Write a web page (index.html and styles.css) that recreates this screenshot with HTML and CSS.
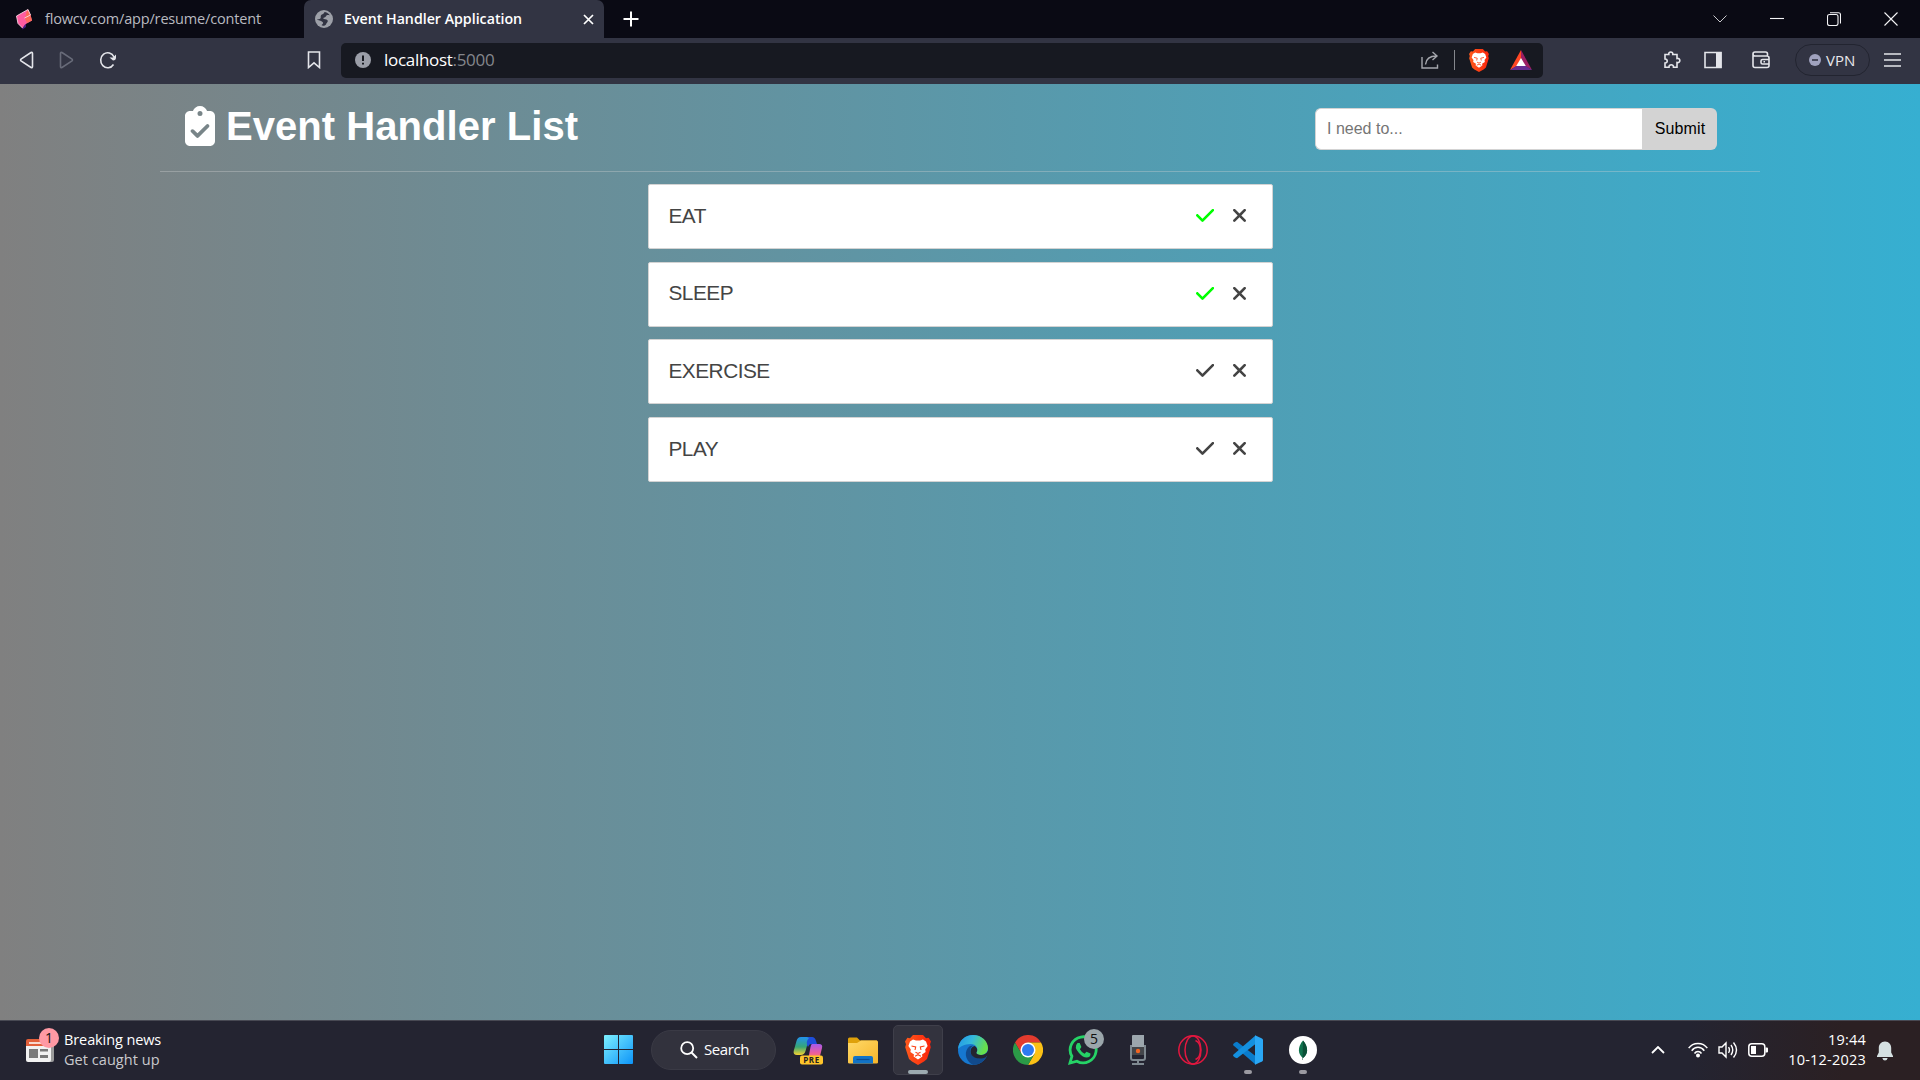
FILE: index.html
```html
<!DOCTYPE html>
<html lang="en">
<head>
<meta charset="utf-8">
<title>Event Handler Application</title>
<link rel="stylesheet" href="styles.css">
</head>
<body>
<svg class="sprite" width="0" height="0" aria-hidden="true">
  <defs>
    <linearGradient id="brave-fill" x1="0" y1="0" x2="1" y2="0"><stop offset="0" stop-color="#ff5a1c"/><stop offset="1" stop-color="#f9240c"/></linearGradient>
    <linearGradient id="win-fill" x1="0" y1="0" x2="1" y2="1"><stop offset="0" stop-color="#7df0ff"/><stop offset="1" stop-color="#0d94f8"/></linearGradient>
    <symbol id="check" viewBox="0 0 448 512"><path d="M438.6 105.4c12.5 12.5 12.5 32.8 0 45.3l-256 256c-12.5 12.5-32.8 12.5-45.3 0l-128-128c-12.5-12.5-12.5-32.8 0-45.3s32.8-12.5 45.3 0L160 338.7 393.4 105.4c12.5-12.5 32.8-12.5 45.3 0z"/></symbol>
    <symbol id="xmark" viewBox="0 0 320 512"><path d="M310.6 150.6c12.5-12.5 12.5-32.8 0-45.3s-32.8-12.5-45.3 0L160 210.7 54.6 105.4c-12.5-12.5-32.8-12.5-45.3 0s-12.5 32.8 0 45.3L114.7 256 9.4 361.4c-12.5 12.5-12.5 32.8 0 45.3s32.8 12.5 45.3 0L160 301.3 265.4 406.6c12.5 12.5 32.8 12.5 45.3 0s12.5-32.8 0-45.3L205.3 256 310.6 150.6z"/></symbol>
    <symbol id="lion" viewBox="0 0 26 30">
      <path fill="url(#brave-fill)" d="M8 0h10l3 3.2 2.6-.4L26 6.600l-1 2.600.8 3L22 24l-3 2.600-6 3.400-6-3.400L4 24 .2 12.200l.8-3L0 6.600l2.400-3.800L5 3.200z"/>
      <path fill="#fff" d="M8 4.600l3 .8h4l3-.8 3 2L22.600 11l-2.400 3.400.4 2.600-3.600 2.400.4 2.200-4.400 3-4.400-3 .4-2.200L5.400 17l.4-2.600L3.400 11 5 6.600z"/>
      <path fill="none" stroke="#fb4216" stroke-width="1.100" d="M6.500 11l4.200 1-.7 3M19.500 11l-4.200 1 .7 3M10.500 17.200l2.500 1.200 2.500-1.200M10 21.200l3-1.500 3 1.500"/>
    </symbol>
  </defs>
</svg>

<div class="screen">
  <header class="browser">
    <div class="tabstrip">
      <div class="tab">
        <svg class="tab-icon" width="18" height="22" viewBox="0 0 18 22"><path fill="#4a1c80" d="M6 15.500l5-1v4.500l-3.500 2.500z"/><path fill="#ff5ca0" d="M1.500 8L13 1.500l2.500 5.500 1.500 5.500-7 4-2.500 3.500-4.500-4.500z"/><path fill="#ff6a58" d="M13 1.500L15.500 7l1.500 5.500-5 2.500-2-4.500 1.500-6.500z"/><path stroke="#f7d5e2" stroke-width=".9" fill="none" d="M13 1.500L1.500 8 3 15.500l4.500 4.500M13 1.500l2.500 5.500-6 3"/></svg>
        <span class="tab-title">flowcv.com/app/resume/content</span>
      </div>
      <div class="tab tab-active">
        <svg class="tab-globe" width="18" height="18" viewBox="0 0 18 18"><circle cx="9" cy="9" r="9" fill="#9da0a8"/><path fill="#323443" d="M9.500 2c2 .2 4 1.400 5.500 3.500-1.600-.6-3.500-.6-4 .8-.6 1.600-2.500.8-2.800 2.200.6 1.300 3.300.3 4.300 1.700 1 1.600-.9 2.200-1.500 4.300-1 1.600-4 1.800-4.500.6 1-1 2-1.500 1.500-2.600C7 10.700 4 10.700 2 9.500c.2-.8 2 .3 3.200-.7C6.500 7.500 5 6.500 6.200 5 7 4 9 4 9.500 2z"/></svg>
        <span class="tab-title tab-title-active">Event Handler Application</span>
        <svg class="tab-close" width="11" height="11" viewBox="0 0 11 11"><path d="M1 1l9 9M10 1l-9 9" stroke="#fff" stroke-width="1.700"/></svg>
      </div>
      <svg class="tab-new" width="16" height="16" viewBox="0 0 16 16"><path d="M8 .5v15M.5 8h15" stroke="#fff" stroke-width="2"/></svg>
      <div class="window-buttons">
        <svg class="tab-search" width="14" height="14" viewBox="0 0 14 14"><path d="M.5 3.500l6.500 6.500L13.500 3.500"/></svg>
        <svg width="14" height="14" viewBox="0 0 14 14"><path d="M0 6.500h14"/></svg>
        <svg width="14" height="14" viewBox="0 0 14 14"><rect x=".5" y="2.500" width="10.500" height="11" rx="2"/><path d="M3 .7h8.500a2 2 0 0 1 2 2V11.500"/></svg>
        <svg width="14" height="14" viewBox="0 0 14 14"><path d="M.5.5l13 13M13.500.5l-13 13"/></svg>
      </div>
    </div>
    <div class="toolbar">
      <div class="nav-buttons">
        <svg width="15" height="18" viewBox="0 0 15 18"><path d="M12 1.500L2 8.200q-.9.800 0 1.600l10 6.700q1.500.5 1.500-1V2.500q0-1.500-1.500-1z"/></svg>
        <svg class="nav-off" width="15" height="18" viewBox="0 0 15 18"><path d="M3 1.500l10 6.700q.9.800 0 1.600L3 16.500q-1.500.5-1.500-1V2.500q0-1.500 1.500-1z"/></svg>
        <svg width="18" height="18" viewBox="0 0 18 18"><path d="M14.500 13.500A7 7.500 0 1 1 15 6"/><path fill="#e4e5ea" stroke="none" d="M10.500 6.500h3.500l3-3v3q0 3-3 3z"/></svg>
      </div>
      <svg class="bookmark" width="14" height="18" viewBox="0 0 14 18"><path d="M1.500 1h11v15.500L7 11.800l-5.500 4.700z"/></svg>
      <div class="address">
        <svg width="16" height="16" viewBox="0 0 16 16"><circle cx="8" cy="8" r="8" fill="#9b9ea8"/><path d="M8 3.500v5.500M8 10.800v1.800" stroke="#16181f" stroke-width="2"/></svg>
        <span class="url">localhost<span class="port">:5000</span></span>
        <svg class="share" width="18" height="18" viewBox="0 0 18 18"><path d="M1 6v11h15.500v-3.500M4.500 13.500C5 8 8 5 15.500 5M11.500 1l4.500 4-4.500 4"/></svg>
        <i class="address-rule"></i>
        <svg class="shield" width="20" height="23"><use href="#lion"/></svg>
        <svg class="bat" width="22" height="20" viewBox="0 0 22 20"><path fill="#ff4724" d="M11 0L0 20l7-4 4-7z"/><path fill="#9e1f63" d="M11 0l11 20-7-4-4-7z"/><path fill="#662d91" d="M0 20l7-4.500h8l7 4.500z"/><path fill="#fff" d="M11 8l4.800 8H6.200z"/></svg>
      </div>
      <div class="extensions">
        <svg width="18" height="18" viewBox="0 0 18 18"><path d="M2 3.500h3.800C5 .2 10.500.2 9.800 3.500H14v4c3.800-.8 3.800 4.800 0 4v4.700h-3.500c.3-3.200-4.800-3.200-4.500 0H2V12c3 .2 3-4.200 0-4z"/></svg>
        <svg class="sidepanel" width="18" height="18" viewBox="0 0 18 18"><path d="M1 1.500h16v15H1z"/><path fill="#e4e5ea" stroke="none" d="M12 1h5.500v16H12z"/></svg>
        <svg width="18" height="18" viewBox="0 0 18 18"><path d="M1 3v11.500q0 2 2 2h12q2 0 2-2V7q0-2-2-2H3Q1 5 1 3q0-2 2-2h10.500q2 0 2 2v2M17 8.500h-6.500q-1.500 0-1.500 1.500v1.500q0 1.500 1.500 1.500H17M11.500 10.800h1.500"/></svg>
        <span class="vpn"><svg width="12" height="12" viewBox="0 0 12 12"><circle cx="6" cy="6" r="6" fill="#a0a2be" stroke="none"/><path d="M3 6h6" stroke="#323443"/></svg><span class="vpn-label">VPN</span></span>
        <svg class="menu" width="17" height="14" viewBox="0 0 17 14"><path d="M0 1h17M0 7h17M0 13h17"/></svg>
      </div>
    </div>
  </header>

  <main class="page">
    <div class="page-head">
      <h1 class="page-title"><svg width="30" height="40" viewBox="0 0 384 512"><path fill="#fff" d="M192 0c-41.800 0-77.400 26.700-90.500 64H64C28.700 64 0 92.700 0 128V448c0 35.300 28.700 64 64 64H320c35.300 0 64-28.700 64-64V128c0-35.300-28.700-64-64-64H282.500C269.400 26.700 233.800 0 192 0zm0 64a32 32 0 1 1 0 64 32 32 0 1 1 0-64zM305 273L177 401c-9.400 9.400-24.600 9.400-33.900 0L79 337c-9.400-9.400-9.400-24.600 0-33.900s24.600-9.400 33.900 0l47 47L271 239c9.400-9.400 24.600-9.400 33.900 0s9.400 24.600 0 33.900z"/></svg><span>Event Handler List</span></h1>
      <form class="todo-form">
        <input class="todo-input" type="text" placeholder="I need to...">
        <button class="todo-submit" type="button">Submit</button>
      </form>
    </div>
    <ul class="todo-list">
      <li class="todo"><span class="todo-name">EAT</span><svg class="done-icon done"><use href="#check"/></svg><svg class="remove-icon"><use href="#xmark"/></svg></li>
      <li class="todo"><span class="todo-name">SLEEP</span><svg class="done-icon done"><use href="#check"/></svg><svg class="remove-icon"><use href="#xmark"/></svg></li>
      <li class="todo"><span class="todo-name">EXERCISE</span><svg class="done-icon"><use href="#check"/></svg><svg class="remove-icon"><use href="#xmark"/></svg></li>
      <li class="todo"><span class="todo-name">PLAY</span><svg class="done-icon"><use href="#check"/></svg><svg class="remove-icon"><use href="#xmark"/></svg></li>
    </ul>
  </main>

  <footer class="taskbar">
    <div class="widget">
      <div class="widget-icon">
        <svg width="28" height="24" viewBox="0 0 28 24"><rect x="4" y="4" width="24" height="20" rx="2" fill="#9b9b9b"/><path fill="#f2f2f2" d="M0 4h25v18q0 2-2 2H2q-2 0-2-2z"/><path fill="#e2603a" d="M2 1h21q2 0 2 2v5H0V3q0-2 2-2z"/><path stroke="#fff" stroke-width="1.500" d="M3 5h14"/><path fill="#797979" d="M3 11h9v9H3zM14 11h8v2.500h-8zM14 17h8v3h-8z"/></svg>
        <span class="badge badge-news">1</span>
      </div>
      <div class="widget-text"><span class="widget-title">Breaking news</span><span class="widget-sub">Get caught up</span></div>
    </div>
    <nav class="apps">
      <div class="app"><svg width="29" height="29" viewBox="0 0 29 29"><path fill="url(#win-fill)" d="M1 0h13v14H0V1q0-1 1-1zM15 0h13q1 0 1 1v13H15zM0 15h14v14H1q-1 0-1-1zM15 15h14v13q0 1-1 1H15z"/></svg></div>
      <div class="search"><svg width="18" height="18" viewBox="0 0 18 18"><circle cx="7.200" cy="7.200" r="6" fill="none" stroke="#fff" stroke-width="1.800"/><path d="M11.500 11.500l5.500 5.500" stroke="#fff" stroke-width="1.900"/></svg><span class="search-label">Search</span></div>
      <div class="app">
        <svg width="30" height="30" viewBox="0 0 30 30">
          <defs><linearGradient id="co-a" x1="0" y1="0" x2="0" y2="1"><stop offset="0" stop-color="#2292ee"/><stop offset=".55" stop-color="#36a675"/><stop offset="1" stop-color="#f6d331"/></linearGradient><linearGradient id="co-b" x1="0" y1="0" x2="0" y2="1"><stop offset="0" stop-color="#a55aeb"/><stop offset=".6" stop-color="#ed5d9c"/><stop offset="1" stop-color="#f58c4a"/></linearGradient></defs>
          <path fill="url(#co-a)" d="M8 2h12q-4 1-5.500 7l-2 7q-1 4-5 4H4q-4 0-3.300-4l2.800-10Q4.500 2 8 2z"/><path fill="#1e4edb" d="M14 2h5q3 0 4 4l1 3h-6q-2 0-3 3-3-5 1-9z"/><path fill="url(#co-b)" d="M19 9h7q4 0 3 4l-2 8q-1 3-5 3h-9q2 0 3-4l1.500-8Q18 9 19 9z"/><rect x="7" y="20.500" width="23" height="9" rx="2" fill="#ffc52b"/><text class="pre-label" x="18.500" y="28" text-anchor="middle">PRE</text>
        </svg>
      </div>
      <div class="app">
        <svg width="30" height="30" viewBox="0 0 30 30"><defs><linearGradient id="fold" x1="0" y1="0" x2="1" y2="1"><stop offset="0" stop-color="#ffd968"/><stop offset="1" stop-color="#f6b52a"/></linearGradient></defs><path fill="#dfa10b" d="M0 4q0-1.500 1.500-1.500H9l3 3h17V12H0z"/><path fill="url(#fold)" d="M0 8h9l4-2.500h15.500Q30 5.500 30 7v20.500q0 1-1.500 1h-27Q0 28.500 0 27.500z"/><path fill="#1273c6" d="M5 28.500V23q0-2 2-2h16q2 0 2 2v5.500z"/><path stroke="#0b4c93" stroke-width="1.200" d="M8.500 24.500h13"/></svg>
      </div>
      <div class="app app-active"><svg width="26" height="30"><use href="#lion"/></svg><i class="run-mark run-wide"></i></div>
      <div class="app">
        <svg width="30" height="30" viewBox="0 0 30 30"><defs><linearGradient id="ed-a" x1="0" y1="0" x2="1" y2=".3"><stop offset="0" stop-color="#2196e8"/><stop offset=".5" stop-color="#35b9dc"/><stop offset="1" stop-color="#67e04c"/></linearGradient></defs>
        <circle cx="15" cy="15" r="15" fill="#1678d0"/><path fill="url(#ed-a)" d="M0 14C1 5 7.500 0 15 0c9 0 15 6.500 15 13 0 4.500-3.500 7-7.500 7-3 0-5-1.200-4-2.700C20.500 14 18.500 9 12.500 9 6.500 9 1.500 12 0 14z"/><path fill="#114a8c" d="M12 11c-6 4-6 14 3 19 6 0 10.500-3.500 13.200-7.500.3-.7-.2-1-.7-.7C21 25 12 22.500 12.200 15.500c0-2 1.300-3.700 3-5z"/><path fill="#24242f" d="M18.500 17.300c1.500-2.500.5-5-2-6.300-4 1-5 5.500-3 9 3 4.200 10 4.500 14.500 2l2.500-3V13.500c-.5 4-3.500 6.500-7.500 6.500-3 0-5-1.200-4.500-2.700z"/></svg>
      </div>
      <div class="app">
        <svg width="30" height="30" viewBox="0 0 30 30"><path fill="#e33b2e" d="M2 7.500A15 15 0 0 1 28 7.500H15l-6.500 11.200z"/><path fill="#fbc116" d="M28 7.500A15 15 0 0 1 15 30l6.500-11.200L15 7.500z"/><path fill="#2b9a47" d="M15 30A15 15 0 0 1 2 7.500l6.500 11.200 13 .1z"/><circle cx="15" cy="15" r="7.500" fill="#fff"/><circle cx="15" cy="15" r="6" fill="#2f7af0"/></svg>
      </div>
      <div class="app">
        <svg width="30" height="30" viewBox="0 0 30 30"><path fill="none" stroke="#25d366" stroke-width="2.800" d="M2 28l1.900-6.700A13 13 0 1 1 8.900 26.200z"/><path fill="#25d366" d="M9.500 8h2.200l1.700 4-1.500 2.200q1.500 3 4.700 4.500l1.900-2 4 1.800q.3 4-4 4Q15 22.500 11 18 5.500 12 9.500 8z"/></svg>
        <span class="badge badge-chat">5</span>
      </div>
      <div class="app">
        <svg width="30" height="30" viewBox="0 0 30 30"><path fill="none" stroke="#7f8991" stroke-width="2" d="M8 10v13q0 2 2 2h10q2 0 2-2V10M15 25v4M9 29h12"/><path fill="#9ca6ad" d="M10 0h11v12H9V1q0-1 1-1z"/><path fill="#44464b" d="M9 12h12v8H9z"/><circle cx="15" cy="16" r="2.200" fill="#f26522"/></svg>
      </div>
      <div class="app">
        <svg width="30" height="30" viewBox="0 0 30 30" fill="none" stroke="#e3173f" stroke-width="1.500"><circle cx="15" cy="15" r="14.200"/><ellipse cx="15" cy="15" rx="8" ry="14"/><path d="M17.500 5.500C24 8 24 22 17.500 24.500"/></svg>
      </div>
      <div class="app">
        <svg width="30" height="30" viewBox="0 0 30 30"><path fill="#0a7ccc" d="M2 7.500l2-.8L22.500 21v8.500L.5 10.500q-.8-1 0-1.800z"/><path fill="#1490df" d="M2 22.500l2 .8L22.500 9V.5L.5 19.500q-.8 1 0 1.800z"/><path fill="#2aa7f5" d="M22 .2l7 3.300q1 .5 1 1.500v20q0 1-1 1.500l-7 3.300z"/></svg>
        <i class="run-mark"></i>
      </div>
      <div class="app">
        <svg width="30" height="30" viewBox="0 0 30 30"><circle cx="15" cy="15" r="14" fill="#fff"/><path fill="#10744e" d="M15 5.500c6 7 5 14 0 17.500-5-3.500-6-10.500 0-17.500z"/><path fill="#0b5037" d="M15 5.500c6 7 5 14 0 17.500v2h-.5z"/></svg>
        <i class="run-mark"></i>
      </div>
    </nav>
    <div class="tray">
      <svg class="tray-up" width="14" height="8" viewBox="0 0 14 8"><path d="M1 7l6-6 6 6" stroke-width="1.800"/></svg>
      <svg width="20" height="16" viewBox="0 0 20 16"><path stroke-width="1.500" d="M.7 6.200C5-.2 15-.2 19.300 6.200M3.700 8.800C7 4.200 13 4.200 16.300 8.800M6.500 11.500c1.800-2.800 5.200-2.800 7 0"/><circle cx="10" cy="13.500" r="2" fill="#fff" stroke="none"/></svg>
      <svg width="20" height="18" viewBox="0 0 20 18"><path stroke-width="1.400" d="M1 6h3l4-4v14l-4-4H1zM10.500 6.200q2 2.800 0 5.600M13 4q3.500 5 0 10M15.500 1.500q6 7.500 0 15"/></svg>
      <svg width="20" height="14" viewBox="0 0 20 14"><rect x=".8" y=".8" width="16" height="12.400" rx="3" stroke-width="1.500"/><path fill="#fff" stroke="none" d="M3 3h5v8H3zM17.500 4.500H19q1 0 1 1v3q0 1-1 1h-1.500z"/></svg>
      <div class="clock"><span class="time">19:44</span><span class="date">10-12-2023</span></div>
      <svg class="bell" width="18" height="20" viewBox="0 0 18 20"><path fill="#d6e1e2" stroke="none" d="M9 .5c4 0 6.200 3 6.200 6.500v4.500l1.800 3.500v1H1v-1l1.800-3.500V7C2.800 3.500 5 .5 9 .5zM6.300 17h5.400q-.7 2.500-2.700 2.500T6.300 17z"/></svg>
    </div>
  </footer>
</div>
</body>
</html>
```
FILE: styles.css
```css
* { box-sizing: border-box; }
body { margin: 0; font-family: "Open Sans", "Noto Sans", sans-serif; color: #fff; }
svg { display: block; flex: none; }
.sprite { position: absolute; }
.screen { width: 1920px; height: 1080px; display: flex; flex-direction: column; overflow: hidden; }

.browser { background: #323443; height: 84px; flex: none; }
.tabstrip { height: 38px; background: #0a0a14; display: flex; align-items: center; }
.tab { width: 304px; height: 38px; padding-left: 15px; display: flex; align-items: center; }
.tab-active { width: 300px; padding: 0 10px 0 11px; background: #323443; border-radius: 7px 7px 0 0; }
.tab-icon { margin-right: 12px; }
.tab-globe { margin-right: 11px; }
.tab-title { padding-bottom: 2px; font-size: 14.5px; letter-spacing: -0.16px; color: #b9bac0; white-space: nowrap; }
.tab-title-active { font-size: 14.2px; font-weight: 600; color: #fff; letter-spacing: 0; }
.tab-close { margin-left: auto; }
.tab-new { margin-left: 19px; }
.window-buttons { margin-left: auto; margin-right: 22px; display: flex; gap: 43px; fill: none; stroke: #f4f4f6; stroke-width: 1.1; }
.tab-search { stroke: #c8c8cc; stroke-width: 1; }

.toolbar { height: 46px; display: flex; align-items: center; padding-bottom: 2px; fill: none; stroke: #e4e5ea; stroke-width: 1.6; }
.nav-buttons { display: flex; gap: 25px; padding-left: 19px; width: 307px; }
.nav-off { stroke: #686b79; }
.bookmark { margin-right: 20px; }
.address { width: 1202px; height: 35px; background: #171921; border-radius: 5px; display: flex; align-items: center; padding: 0 11px 0 14px; stroke: none; }
.url { margin-left: 13px; padding-bottom: 1px; font-size: 17px; letter-spacing: -0.3px; margin-right: auto; }
.port { color: #84868c; }
.share { stroke: #a5a7ad; stroke-width: 1.4; }
.address-rule { width: 1px; height: 20px; background: #85878d; margin: 0 14px 0 15px; }
.bat { margin-left: 21px; }
.extensions { margin-left: auto; margin-right: 19px; display: flex; align-items: center; }
.sidepanel { margin: 0 30px 0 23px; }
.vpn { width: 75px; height: 32px; border: 1.5px solid #222430; border-radius: 16px; margin: 0 14px 0 25px; display: flex; align-items: center; padding-left: 13px; gap: 5px; }
.vpn-label { padding-bottom: 1px; font-size: 15px; color: #e8e8ec; }
.menu { stroke-width: 1.4; }

.page { flex: 1; background: linear-gradient(to right, #808080, #36afd1); font-family: "Liberation Sans", Arial, sans-serif; }
.page-head { width: 1600px; height: 88px; margin: 0 auto; padding: 0 43px 0 25px; border-bottom: 1px solid rgba(211, 211, 211, .35); display: flex; justify-content: space-between; align-items: center; }
.page-title { margin: 0; padding-bottom: 3px; display: flex; align-items: center; gap: 11px; font-size: 40px; line-height: 46px; letter-spacing: 0.05px; font-weight: bold; }
.todo-form { display: flex; height: 42px; margin-top: 2px; }
.todo-input { width: 327px; border: 1px solid #d3d3d3; border-right: 0; border-radius: 6px 0 0 6px; padding: 0 11px 0 11px; font: 16px "Liberation Sans", Arial, sans-serif; }
.todo-input::placeholder { color: #757575; }
.todo-submit { width: 75px; border: 0; background: #d3d3d3; color: #000; border-radius: 0 6px 6px 0; padding: 0 0 0 1px; font: 16px "Liberation Sans", Arial, sans-serif; letter-spacing: 0.1px; }
.todo-list { list-style: none; margin: 12px auto 0; padding: 0; width: 625px; display: flex; flex-direction: column; gap: 12.7px; }
.todo { height: 65px; background: #fff; border: 1px solid #d3d3d3; border-radius: 2px; color: #444; display: flex; align-items: center; padding: 0 26px 2px 20px; font-size: 20.8px; }
.todo-name { margin-right: auto; letter-spacing: -0.5px; }
.done-icon { width: 18.2px; height: 20.8px; fill: #444; }
.done { fill: #0f0; }
.remove-icon { width: 13px; height: 20.8px; fill: #444; margin-left: 18.6px; }

.taskbar { height: 60px; flex: none; padding-bottom: 2px; background: linear-gradient(to right, #242431 0 88%, #2b2023 96%); border-top: 1px solid #484953; display: flex; align-items: center; }
.widget { width: 593px; display: flex; align-items: center; padding-left: 26px; }
.widget-icon { position: relative; width: 38px; }
.badge { position: absolute; width: 20px; height: 20px; border-radius: 50%; font-size: 14px; line-height: 20px; text-align: center; color: #111; }
.badge-news { left: 13px; top: -10px; background: #ff99a4; }
.badge-chat { left: 26px; top: 4px; background: #9ba6ab; }
.widget-text, .clock { display: flex; flex-direction: column; font-size: 14.5px; line-height: 20px; white-space: nowrap; }
.widget-text { letter-spacing: -0.1px; }
.widget-sub { color: #c9c9cd; letter-spacing: 0.05px; }
.apps { display: flex; align-items: center; gap: 5px; }
.app { position: relative; width: 50px; height: 50px; display: flex; align-items: center; justify-content: center; }
.app-active { background: #33333e; border: 1px solid #3f3f4a; border-radius: 5px; }
.run-mark { position: absolute; bottom: 1px; left: 21px; width: 8px; height: 4px; border-radius: 2px; background: #9b9aa1; }
.run-wide { left: 14px; bottom: 0; width: 20px; background: #9caab0; }
.search { width: 125px; height: 40px; margin: 0 2px 0 3px; border-radius: 20px; background: #32323d; border: 1px solid #3a3a45; display: flex; align-items: center; padding-left: 28px; gap: 6px; }
.search-label { padding-bottom: 1px; font-size: 15px; letter-spacing: -0.4px; }
.pre-label { font: bold 8px "Open Sans", sans-serif; letter-spacing: .5px; fill: #222; }
.tray { margin-left: auto; margin-right: 26px; display: flex; align-items: center; gap: 10px; fill: none; stroke: #fff; }
.tray-up { margin-right: 13px; }
.clock { margin-left: 1px; width: 87px; align-items: flex-end; letter-spacing: 0.22px; }
.bell { margin-top: 2px; }
```
